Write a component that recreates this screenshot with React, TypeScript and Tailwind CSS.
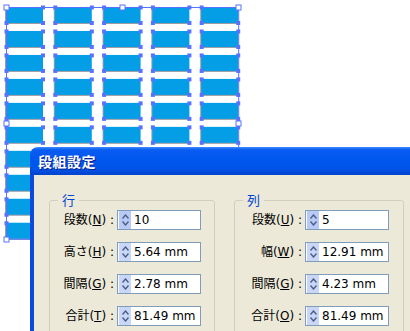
import React from 'react';

const ROWS = 10;
const COLS = 5;
const X0 = 6;
const Y0 = 7;
const PITCH_X = 48.8;
const PITCH_Y = 23.97;
const CELL_W = 37;
const CELL_H = 16;

const GridCanvas: React.FC = () => {
  const cells: { x: number; y: number }[] = [];
  for (let r = 0; r < ROWS; r++) {
    for (let c = 0; c < COLS; c++) {
      cells.push({ x: X0 + c * PITCH_X, y: Y0 + r * PITCH_Y });
    }
  }
  const right = X0 + (COLS - 1) * PITCH_X + CELL_W;
  const bottom = Y0 + (ROWS - 1) * PITCH_Y + CELL_H;
  const midX = (X0 + right) / 2;
  const midY = (Y0 + bottom) / 2;
  const bigHandles = [
    [X0, Y0], [midX, Y0], [right, Y0],
    [X0, midY], [right, midY],
    [X0, bottom], [midX, bottom], [right, bottom],
  ];

  return (
    <svg width="410" height="331" className="absolute inset-0">
      {cells.map((p, i) => (
        <g key={i}>
          <rect x={p.x - 1} y={p.y + 1} width={CELL_W} height={CELL_H} fill="#9c9ca4" />
          <rect x={p.x} y={p.y} width={CELL_W} height={CELL_H} fill="#049ee6" />
        </g>
      ))}
      <rect x={X0 + 0.5} y={Y0 + 0.5} width={right - X0} height={bottom - Y0} fill="none" stroke="#5673ff" strokeWidth="1" />
      {cells.map((p, i) => (
        <g key={'h' + i} fill="#5673ff">
          <rect x={p.x - 1.5} y={p.y - 1.5} width="4" height="4" />
          <rect x={p.x + CELL_W - 2} y={p.y - 1.5} width="4" height="4" />
          <rect x={p.x - 1.5} y={p.y + CELL_H - 2} width="4" height="4" />
          <rect x={p.x + CELL_W - 2} y={p.y + CELL_H - 2} width="4" height="4" />
        </g>
      ))}
      {bigHandles.map(([x, y], i) => (
        <rect key={'b' + i} x={Math.round(x) - 2} y={Math.round(y) - 2} width="5" height="5" fill="#fff" stroke="#5673ff" strokeWidth="1" />
      ))}
    </svg>
  );
};

const Spinner: React.FC<{ active?: boolean }> = ({ active }) => (
  <div className={`w-[12px] h-[18px] ml-[1px] flex flex-col items-center justify-center gap-[2px] ${active ? 'bg-[#b7caf6]' : 'bg-[#c8d7f8]'}`}>
    <svg width="7" height="5" viewBox="0 0 7 5">
      <path d="M0.5 4.5 L3.5 1 L6.5 4.5" fill="none" stroke="#4c5e82" strokeWidth="1.4" />
    </svg>
    <svg width="7" height="5" viewBox="0 0 7 5">
      <path d="M0.5 0.5 L3.5 4 L6.5 0.5" fill="none" stroke="#4c5e82" strokeWidth="1.4" />
    </svg>
  </div>
);

interface Field {
  label: string;
  key: string;
  value: string;
}

const FieldRow: React.FC<{ field: Field; active?: boolean }> = ({ field, active }) => (
  <div className="flex items-center">
    <span className="flex-1 text-right pr-[3px] text-[12px] leading-[16px] text-black whitespace-nowrap font-['DejaVu_Sans','Noto_Sans_CJK_JP',sans-serif]">
      {field.label}(<span className="underline underline-offset-[1px]">{field.key}</span>) :
    </span>
    <div className="w-[84px] h-[20px] bg-white border border-[#7f9db9] flex items-center">
      <Spinner active={active} />
      <span className="pl-[3px] text-[12px] leading-[16px] text-black font-['DejaVu_Sans',sans-serif]">{field.value}</span>
    </div>
  </div>
);

const Group: React.FC<{ title: string; fields: Field[]; width: string; pr: string }> = ({ title, fields, width, pr }) => (
  <fieldset className={`${width} ${pr} border border-[#d0d0bf] rounded-[3px] pt-[2px] pb-[20px]`}>
    <legend className="ml-[8px] px-[4px] text-[13px] leading-[16px] text-[#0046d5]">{title}</legend>
    <div className="flex flex-col gap-[12px]">
      {fields.map((f, i) => (
        <FieldRow key={f.label + f.key} field={f} active={i === 0} />
      ))}
    </div>
  </fieldset>
);

const rowFields: Field[] = [
  { label: '段数', key: 'N', value: '10' },
  { label: '高さ', key: 'H', value: '5.64 mm' },
  { label: '間隔', key: 'G', value: '2.78 mm' },
  { label: '合計', key: 'T', value: '81.49 mm' },
];

const colFields: Field[] = [
  { label: '段数', key: 'U', value: '5' },
  { label: '幅', key: 'W', value: '12.91 mm' },
  { label: '間隔', key: 'G', value: '4.23 mm' },
  { label: '合計', key: 'O', value: '81.49 mm' },
];

export default function App() {
  return (
    <div className="relative w-[410px] h-[331px] overflow-hidden bg-white font-['Noto_Sans_CJK_JP',sans-serif]">
      <GridCanvas />
      <div className="absolute left-[30px] top-[147px] w-[400px] h-[200px] flex flex-col rounded-tl-[8px] overflow-hidden">
        <div className="h-[28px] shrink-0 flex items-center pl-[8px] bg-[linear-gradient(to_bottom,#3d8cff_0%,#0a5cf2_10%,#0057ee_45%,#0053e6_80%,#0042cc_100%)]">
          <span className="text-white text-[14px] font-bold tracking-[0.5px] leading-[18px] [text-shadow:1px_1px_0_#0a1e8c]">段組設定</span>
        </div>
        <div className="flex-1 bg-[#ece9d8] border-l-[4px] border-[#0b48dc] pt-[17px] pl-[15px] flex gap-[19px] items-start">
          <Group title="行" fields={rowFields} width="w-[166px]" pr="pr-[13px]" />
          <Group title="列" fields={colFields} width="w-[170px]" pr="pr-[14px]" />
        </div>
      </div>
    </div>
  );
}
